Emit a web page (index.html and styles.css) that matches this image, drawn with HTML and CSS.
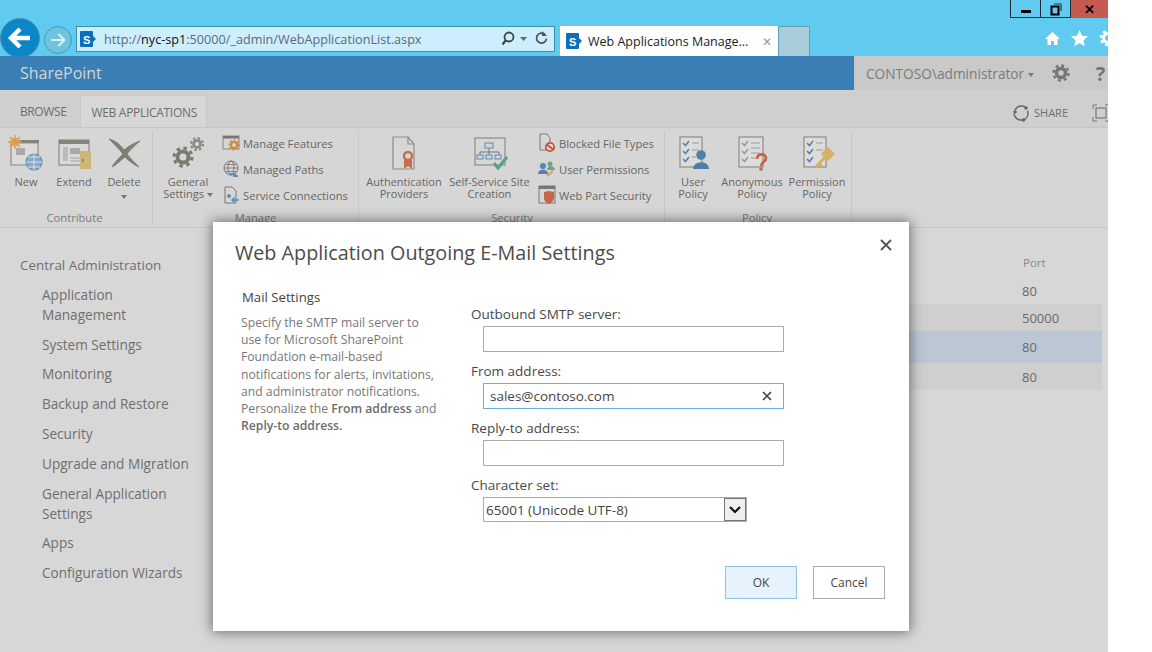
FILE: index.html
```html
<!DOCTYPE html>
<html lang="en">
<head>
<meta charset="utf-8">
<title>Web Applications Management</title>
<link rel="stylesheet" href="styles.css">
</head>
<body>
<div class="page">
  <header class="chrome">
    <div class="winbar">
      <div class="winbtn win-min"><svg width="12" height="12" viewBox="0 0 12 12"><rect x="1" y="7" width="10" height="3" fill="#000"/></svg></div>
      <div class="winbtn win-max"><svg width="14" height="14" viewBox="0 0 14 14"><rect x="2.5" y="4.5" width="7" height="8" fill="none" stroke="#000" stroke-width="2"/><path d="M5 2h7v7" fill="none" stroke="#333" stroke-width="1.2"/></svg></div>
      <div class="winbtn win-close">&#10005;</div>
    </div>
    <div class="navbar">
      <div class="back"><svg width="26" height="24" viewBox="0 0 26 24"><path d="M23 12H5M13 3l-9 9 9 9" fill="none" stroke="#fff" stroke-width="4.4"/></svg></div>
      <div class="forward"><svg width="18" height="16" viewBox="0 0 18 16"><path d="M2 8h13M9.500 2l6 6-6 6" fill="none" stroke="#d6f2fb" stroke-width="2"/></svg></div>
      <div class="address">
        <svg class="sp" width="18" height="18" viewBox="0 0 18 18"><rect x="1" y="1" width="13" height="16" rx="1" fill="#0b6fc0"/><path d="M13 5l4 4-4 4z" fill="#0b6fc0"/><text x="4" y="14" class="sp-s">S</text></svg>
        <span class="url">http://<b>nyc-sp1</b>:50000/_admin/WebApplicationList.aspx</span>
        <svg class="addr-tools" width="50" height="18" viewBox="0 0 50 18"><circle cx="8" cy="7" r="4.500" fill="none" stroke="#444" stroke-width="1.800"/><path d="M5 10l-3.500 4.500" stroke="#444" stroke-width="2.200"/><path d="M19 7h7l-3.500 4z" fill="#666"/><path d="M44 4.500a5 5 0 1 0 1.500 4" fill="none" stroke="#555" stroke-width="1.800"/><path d="M41 1v5h5z" fill="#555"/></svg>
      </div>
      <div class="tab">
        <svg class="sp" width="18" height="18" viewBox="0 0 18 18"><rect x="1" y="1" width="13" height="16" rx="1" fill="#0b6fc0"/><path d="M13 5l4 4-4 4z" fill="#0b6fc0"/><text x="4" y="14" class="sp-s">S</text></svg>
        <span class="tab-title">Web Applications Manage...</span>
        <span class="tab-x">&#10005;</span>
      </div>
      <div class="newtab"></div>
      <div class="ie-tools">
        <svg width="17" height="17" viewBox="0 0 17 17"><path d="M8.500 2L1 9h2.500v6h3.500v-4h3v4h3.500V9H16z" fill="#fff"/></svg>
        <svg width="19" height="18" viewBox="0 0 19 18"><path d="M9.500 1l2.500 5.700 6 .6-4.500 4 1.300 6-5.300-3.100-5.300 3.100 1.300-6L1 7.300l6-.6z" fill="#fff"/></svg>
        <svg width="20" height="18" viewBox="0 0 18 18"><circle cx="9" cy="9" r="4.500" fill="none" stroke="#fff" stroke-width="3"/><circle cx="9" cy="9" r="7" fill="none" stroke="#fff" stroke-width="2.500" stroke-dasharray="3 2.500"/></svg>
      </div>
    </div>
  </header>

  <div class="suite">
    <div class="brand">SharePoint</div>
    <div class="suite-user">
      <span class="user-name">CONTOSO\administrator <i class="caret"></i></span>
      <svg class="suite-gear" width="20" height="20" viewBox="0 0 20 20"><circle cx="10" cy="10" r="4.500" fill="none" stroke="#757575" stroke-width="3.400"/><circle cx="10" cy="10" r="7.500" fill="none" stroke="#757575" stroke-width="2.400" stroke-dasharray="3 2.900"/></svg>
      <span class="help">?</span>
    </div>
  </div>

  <div class="tabs">
    <span class="rtab">BROWSE</span>
    <span class="rtab rtab-active">WEB APPLICATIONS</span>
    <div class="tabs-right">
      <svg width="18" height="18" viewBox="0 0 18 18"><path d="M3 6a7 7 0 0 1 10-3M15.500 7a7 7 0 0 1-3 8.500M10 16a7 7 0 0 1-8-6" fill="none" stroke="#666" stroke-width="1.500"/><circle cx="14" cy="4" r="1.800" fill="#666"/><circle cx="3" cy="8" r="1.800" fill="#666"/><circle cx="11.500" cy="16" r="1.800" fill="#666"/></svg>
      <span class="share">SHARE</span>
      <svg class="focus" width="18" height="18" viewBox="0 0 18 18"><path d="M1 5V1h4M13 1h4v4M1 13v4h4M13 17h4v-4" fill="none" stroke="#777" stroke-width="1"/><rect x="4" y="4" width="10" height="10" fill="none" stroke="#777" stroke-width="1.200"/></svg>
    </div>
  </div>

  <div class="ribbon">
    <section class="group g-contribute">
      <div class="group-body">
        <div class="big w48">
          <svg class="ic" width="36" height="36" viewBox="0 0 36 36"><path d="M3 8h27v22H3z" fill="#dcdcdc" stroke="#8f8d80" stroke-width="1.200"/><rect x="3" y="5" width="28" height="3" fill="#85847a"/><rect x="8" y="13" width="9" height="7" fill="#a9a9a9"/><circle cx="7" cy="7" r="4.500" fill="#d8b47a"/><path d="M7 0v14M0 7h14M2 2l10 10M12 2L2 12" stroke="#d99a4a" stroke-width="1.300"/><circle cx="26" cy="27" r="8" fill="#8aa8c4" stroke="#5c8cb8" stroke-width="1.200"/><path d="M18 27h16M26 19v16M20 22h12M20 32h12" stroke="#d9e3ea" stroke-width="1"/></svg>
          <span>New</span>
        </div>
        <div class="big w48">
          <svg class="ic" width="36" height="36" viewBox="0 0 36 36"><rect x="3" y="5" width="30" height="25" fill="#d9d9d9" stroke="#8f8d80" stroke-width="1.200"/><rect x="3" y="5" width="30" height="4" fill="#85847a"/><rect x="7" y="12" width="5" height="14" fill="#bbb"/><rect x="14" y="13" width="10" height="6" fill="#a9a9a9"/><path d="M14 23h10M14 26h10" stroke="#a5a5a5"/><rect x="24" y="16" width="11" height="18" fill="#cdb67a"/><rect x="26" y="24" width="1.500" height="3" fill="#8f7b45"/></svg>
          <span>Extend</span>
        </div>
        <div class="big w48 gap2">
          <svg class="ic" width="36" height="36" viewBox="0 0 36 36"><path d="M3 4c8 2 12 7 15 11C23 11 28 8 34 6c-4 3-11 10-13 13 3 4 8 9 12 13-5-2-11-7-14-10-4 3-9 8-13 10 2-4 8-10 11-13C14 15 8 9 3 4z" fill="#807e72" stroke="#807e72"/></svg>
          <span>Delete</span>
          <i class="caret caret-under"></i>
        </div>
      </div>
      <div class="group-label">Contribute</div>
    </section>

    <section class="group g-manage">
      <div class="group-body">
        <div class="big w60">
          <svg class="ic" width="36" height="36" viewBox="0 0 36 36"><circle cx="13" cy="22" r="5.500" fill="none" stroke="#7c7a6e" stroke-width="4"/><circle cx="13" cy="22" r="9" fill="none" stroke="#7c7a6e" stroke-width="3" stroke-dasharray="3.500 3.600"/><circle cx="27" cy="9" r="3.500" fill="none" stroke="#8c8a7e" stroke-width="2.600"/><circle cx="27" cy="9" r="6" fill="none" stroke="#8c8a7e" stroke-width="2.200" stroke-dasharray="2.400 2.300"/></svg>
          <span>General<br>Settings <i class="caret"></i></span>
        </div>
        <div class="smalls">
          <div class="small"><svg width="18" height="18" viewBox="0 0 18 18"><rect x="1" y="2" width="16" height="13" fill="none" stroke="#888"/><rect x="1" y="2" width="16" height="2.500" fill="#777"/><circle cx="12" cy="11" r="3" fill="none" stroke="#d08838" stroke-width="2"/><circle cx="12" cy="11" r="4.800" fill="none" stroke="#d08838" stroke-width="1.500" stroke-dasharray="1.800 1.800"/></svg><span>Manage Features</span></div>
          <div class="small"><svg width="18" height="18" viewBox="0 0 18 18"><circle cx="9" cy="8" r="7" fill="none" stroke="#777"/><ellipse cx="9" cy="8" rx="3" ry="7" fill="none" stroke="#777"/><path d="M2 8h14M3 4.500h12M3 11.500h12" stroke="#777" stroke-width=".8"/><path d="M8 14h6M11 16h5" stroke="#5c8cb8" stroke-width="2"/></svg><span>Managed Paths</span></div>
          <div class="small"><svg width="18" height="18" viewBox="0 0 18 18"><path d="M3 1h7l4 4v12H3z" fill="none" stroke="#777"/><circle cx="7" cy="10" r="2" fill="#5c8cb8"/><path d="M17 14H10M12.500 11.500L10 14l2.500 2.500" fill="none" stroke="#5c8cb8" stroke-width="1.500"/></svg><span>Service Connections</span></div>
        </div>
      </div>
      <div class="group-label">Manage</div>
    </section>

    <section class="group g-security">
      <div class="group-body">
        <div class="big w78">
          <svg class="ic" width="36" height="36" viewBox="0 0 36 36"><path d="M7 2h15l6 7v25H7z" fill="none" stroke="#8f8d80" stroke-width="1.200"/><path d="M22 2v7h6" fill="none" stroke="#8f8d80" stroke-width="1.200"/><circle cx="22" cy="21" r="4" fill="none" stroke="#c76c4c" stroke-width="2.400"/><path d="M18 25h8v9l-4-3-4 3z" fill="#c76c4c"/></svg>
          <span>Authentication<br>Providers</span>
        </div>
        <div class="big w83">
          <svg class="ic" width="36" height="36" viewBox="0 0 36 36"><rect x="3" y="3" width="30" height="27" fill="none" stroke="#8f8d80" stroke-width="1.200"/><rect x="13" y="8" width="8" height="5" fill="none" stroke="#5c8cb8"/><path d="M17 13v4M8 17h19M8 17v3M17 17v3M27 17v3" stroke="#777" fill="none"/><rect x="5" y="20" width="6" height="4" fill="none" stroke="#5c8cb8"/><rect x="14" y="20" width="6" height="4" fill="none" stroke="#5c8cb8"/><rect x="23" y="20" width="6" height="4" fill="none" stroke="#5c8cb8"/><path d="M22 28l4 5 9-11" fill="none" stroke="#58a08c" stroke-width="3"/></svg>
          <span>Self-Service Site<br>Creation</span>
        </div>
        <div class="smalls">
          <div class="small"><svg width="18" height="20" viewBox="0 0 18 20"><path d="M2 1h7l3 4v12H2z" fill="none" stroke="#777"/><circle cx="12" cy="14" r="4.200" fill="#ddd" stroke="#c0573c" stroke-width="1.800"/><path d="M9 11.500l6 5" stroke="#c0573c" stroke-width="1.800"/></svg><span>Blocked File Types</span></div>
          <div class="small"><svg width="18" height="18" viewBox="0 0 18 18"><circle cx="5" cy="6" r="3" fill="#5c82ad"/><path d="M0 14c0-6 10-6 10 0z" fill="#5c82ad"/><circle cx="12" cy="4" r="2.500" fill="#70a088"/><path d="M9 10c0-5 8-5 8 0z" fill="#70a088"/><path d="M9 16l6-5" stroke="#cdae6c" stroke-width="2.400"/></svg><span>User Permissions</span></div>
          <div class="small"><svg width="18" height="20" viewBox="0 0 18 20"><rect x="1" y="1" width="16" height="17" fill="none" stroke="#777"/><rect x="1" y="1" width="16" height="3" fill="#777"/><path d="M6 7l5-1 5 1v6c0 3-3 5-5 6-2-1-5-3-5-6z" fill="#c76644"/></svg><span>Web Part Security</span></div>
        </div>
      </div>
      <div class="group-label">Security</div>
    </section>

    <section class="group g-policy">
      <div class="group-body">
        <div class="big w50">
          <svg class="ic" width="36" height="36" viewBox="0 0 36 36"><rect x="5" y="2" width="22" height="30" fill="#dcdcdc" stroke="#8f8d80" stroke-width="1.200"/><path d="M8 8l2.500 2.500L14 6M8 16l2.500 2.500L14 14M8 24l2.500 2.500L14 22" fill="none" stroke="#4f80b0" stroke-width="1.500"/><path d="M17 8h7M17 15h7M17 22h4" stroke="#999" stroke-width="1.200"/><circle cx="26" cy="20" r="4.800" fill="#4f7fa8"/><path d="M18 34c0-9 16-9 16 0z" fill="#4f7fa8"/></svg>
          <span>User<br>Policy</span>
        </div>
        <div class="big w64">
          <svg class="ic" width="36" height="36" viewBox="0 0 36 36"><rect x="5" y="2" width="24" height="30" fill="#dcdcdc" stroke="#8f8d80" stroke-width="1.200"/><path d="M8 8l2.500 2.500L14 6M8 16l2.500 2.500L14 14M8 24l2.500 2.500L14 22" fill="none" stroke="#999" stroke-width="1.500"/><path d="M17 8h9M17 13h9M17 18h9M17 23h4" stroke="#999" stroke-width="1.200"/><path d="M23 24c0-6 9-6 9-1 0 4-5 4-5 8" fill="none" stroke="#c7613e" stroke-width="2.600"/><circle cx="27" cy="34" r="1.800" fill="#c7613e"/></svg>
          <span>Anonymous<br>Policy</span>
        </div>
        <div class="big w62">
          <svg class="ic" width="36" height="36" viewBox="0 0 36 36"><rect x="5" y="2" width="22" height="30" fill="#dcdcdc" stroke="#8f8d80" stroke-width="1.200"/><path d="M8 8l2.500 2.500L14 6M8 16l2.500 2.500L14 14M8 24l2.500 2.500L14 22" fill="none" stroke="#4f80b0" stroke-width="1.500"/><path d="M17 8h7M17 15h7" stroke="#999" stroke-width="1.200"/><rect x="24" y="14" width="10" height="10" transform="rotate(45 29 19)" fill="#d2b265"/><path d="M26 22L17 32M20 29l3 2" stroke="#d2b265" stroke-width="3"/></svg>
          <span>Permission<br>Policy</span>
        </div>
      </div>
      <div class="group-label">Policy</div>
    </section>
  </div>

  <div class="content">
    <nav class="sidenav">
      <a class="nav-root">Central Administration</a>
      <a class="nav-item">Application<br>Management</a>
      <a class="nav-item">System Settings</a>
      <a class="nav-item">Monitoring</a>
      <a class="nav-item">Backup and Restore</a>
      <a class="nav-item">Security</a>
      <a class="nav-item">Upgrade and Migration</a>
      <a class="nav-item">General Application<br>Settings</a>
      <a class="nav-item">Apps</a>
      <a class="nav-item">Configuration Wizards</a>
    </nav>
    <div class="list">
      <div class="list-head">Port</div>
      <div class="list-row r1">80</div>
      <div class="list-row r2 alt">50000</div>
      <div class="list-row r3 sel">80</div>
      <div class="list-row r4 alt">80</div>
    </div>
  </div>

  <div class="modal">
    <div class="modal-head">
      <h1>Web Application Outgoing E-Mail Settings</h1>
      <svg class="modal-x" width="12" height="12" viewBox="0 0 12 12"><path d="M1 1l10 10M11 1L1 11" stroke="#555" stroke-width="1.900"/></svg>
    </div>
    <div class="modal-body">
      <div class="desc">
        <h2>Mail Settings</h2>
        <p>Specify the SMTP mail server to use for Microsoft SharePoint Foundation e-mail-based notifications for alerts, invitations, and administrator notifications. Personalize the <b>From address</b> and <b>Reply-to address.</b></p>
      </div>
      <div class="form">
        <label class="lab">Outbound SMTP server:</label>
        <div class="input"></div>
        <label class="lab">From address:</label>
        <div class="input input-focus"><span>sales@contoso.com</span><svg width="10" height="10" viewBox="0 0 10 10"><path d="M1 1l8 8M9 1L1 9" stroke="#444" stroke-width="1.700"/></svg></div>
        <label class="lab">Reply-to address:</label>
        <div class="input"></div>
        <label class="lab">Character set:</label>
        <div class="select"><span>65001 (Unicode UTF-8)</span><div class="select-btn"><svg width="14" height="10" viewBox="0 0 14 10"><path d="M2 2l5 5 5-5" fill="none" stroke="#111" stroke-width="2.200"/></svg></div></div>
      </div>
    </div>
    <div class="modal-foot">
      <div class="btn btn-ok">OK</div>
      <div class="btn">Cancel</div>
    </div>
  </div>
</div>
</body>
</html>
```
FILE: styles.css
```css
* { box-sizing: border-box; }
html, body { margin: 0; padding: 0; background: #fff; }
body { font-family: "Open Sans", "Noto Sans", "Liberation Sans", sans-serif; overflow: hidden; }
.page { position: relative; width: 1108px; height: 652px; overflow: hidden; background: #d7d7d7; display: flex; flex-direction: column; }

/* browser chrome */
.chrome { height: 56px; flex: none; background: #60caf0; overflow: hidden; }
.winbar { height: 26px; display: flex; justify-content: flex-end; align-items: flex-start; }
.winbtn { height: 18px; border: 1px solid #1c2b33; border-top: 0; display: flex; align-items: center; justify-content: center; }
.win-min { width: 31px; }
.win-max { width: 30px; border-left: 0; }
.win-close { width: 37px; border: 0; background: #c65a51; color: #000; font-size: 13px; font-weight: 700; }
.navbar { height: 30px; display: flex; align-items: flex-start; }
.back { width: 40px; height: 40px; margin: -8px 0 0 0; border-radius: 50%; background: #0b86c6; border: 1px solid #4a93ad; flex: none; display: flex; align-items: center; justify-content: center; }
.forward { width: 28px; height: 28px; margin: 0 4px 0 4px; border-radius: 50%; background: #6fc3de; border: 1px solid #3f9dbb; flex: none; display: flex; align-items: center; justify-content: center; }
.address { width: 479px; height: 26px; background: #cdeeff; border: 1px solid #3f8fa8; display: flex; align-items: center; padding-left: 2px; flex: none; }
.sp { flex: none; }
.sp-s { font: 700 11px "Liberation Sans", sans-serif; fill: #fff; }
.url { margin-left: 7px; font-size: 12.650px; color: #5c6b72; white-space: nowrap; flex: 1; }
.url b { font-weight: 400; color: #111; }
.addr-tools { flex: none; margin-right: 3px; }
.tab { width: 218px; height: 30px; margin-left: 5px; background: #fff; display: flex; align-items: center; padding-left: 5px; flex: none; }
.tab-title { margin-left: 5px; font-size: 12.500px; color: #222; white-space: nowrap; flex: 1; }
.tab-x { color: #9a9a9a; font-size: 12px; margin-right: 6px; }
.newtab { width: 32px; height: 30px; background: #a8ccd8; border: 1px solid #5aa3bb; border-bottom: 0; flex: none; }
.ie-tools { display: flex; gap: 9px; margin-left: auto; margin-right: -10px; margin-top: 3px; align-items: center; flex: none; }

/* suite bar */
.suite { height: 34px; flex: none; display: flex; background: #3a7fb5; }
.brand { flex: 1; padding-left: 20px; font-size: 16px; line-height: 34px; color: #d5d5d5; }
.suite-user { width: 254px; background: #c9c9c9; display: flex; align-items: center; padding-left: 12px; color: #7b7b7b; overflow: hidden; }
.user-name { font-size: 13.700px; white-space: nowrap; }
.suite-gear { margin-left: 17px; flex: none; }
.help { margin-left: 25px; font-size: 20px; font-weight: 700; color: #757575; }
.caret { display: inline-block; width: 0; height: 0; border: 3.500px solid transparent; border-top: 4px solid #777; border-bottom: 0; vertical-align: middle; }

/* ribbon */
.tabs { height: 38px; flex: none; background: #cfcfcf; display: flex; align-items: flex-end; padding-left: 8px; border-bottom: 1px solid #c5c5c5; }
.rtab { height: 32px; padding: 0 12px; font-size: 12px; line-height: 33px; color: #6d6d6d; letter-spacing: -.4px; }
.rtab-active { width: 127px; background: #d7d7d7; border: 1px solid #c9c9c9; border-bottom: 0; padding: 0 0 0 10px; margin-left: 2px; letter-spacing: -.3px; }
.tabs-right { margin-left: auto; display: flex; align-items: center; align-self: center; margin-top: 8px; margin-right: -2px; gap: 4px; }
.share { font-size: 11px; color: #707070; margin-right: 20px; }
.ribbon { height: 100px; flex: none; background: #d6d6d6; border-bottom: 1px solid #c6c6c6; display: flex; padding-top: 3px; }
.group { display: flex; flex-direction: column; border-right: 1px solid #c8c8c8; height: 94px; flex: none; }
.g-contribute { width: 153px; padding-left: 2px; }
.g-manage { width: 206px; padding-left: 5px; }
.g-security { width: 306px; padding-left: 6px; }
.g-policy { width: 187px; padding-left: 3px; }
.group-body { height: 80px; display: flex; gap: 2px; }
.g-contribute .group-body { gap: 0; }
.g-security .group-body { gap: 5px; }
.group-label { height: 14px; line-height: 14px; margin-top: 1px; padding-right: 5px; text-align: center; font-size: 11.200px; color: #7b7b7b; }
.big { display: flex; flex-direction: column; align-items: center; font-size: 11px; line-height: 12px; color: #666; text-align: center; white-space: nowrap; flex: none; }
.ic { margin: 4px 0 5px; flex: none; }
.gap2 { margin-left: 2px; }
.caret-under { margin-top: 7px; }
.w48 { width: 48px; } .w50 { width: 50px; } .w60 { width: 60px; } .w62 { width: 62px; }
.w64 { width: 64px; } .w78 { width: 78px; } .w83 { width: 83px; }
.smalls { display: flex; flex-direction: column; gap: 6px; padding-top: 2px; margin-left: 2px; }
.small { height: 20px; display: flex; align-items: center; gap: 3px; font-size: 11.200px; color: #666; white-space: nowrap; }
.small svg { flex: none; }

/* content */
.content { flex: 1; display: flex; }
.sidenav { width: 230px; flex: none; padding: 27px 0 0 20px; display: flex; flex-direction: column; gap: 9.800px; font-size: 13.400px; line-height: 20px; color: #6f6f6f; }
.nav-item { padding-left: 22px; font-size: 13.600px; }
.list { flex: 1; padding: 26px 6px 0 0; }
.list-head { height: 22px; line-height: 18px; padding-left: 793px; font-size: 11.500px; color: #8b8b8b; }
.list-row { padding-left: 792px; font-size: 13px; color: #6a6a6a; display: flex; align-items: center; }
.r1 { height: 28px; padding-top: 2px; }
.r2 { height: 27px; }
.r3 { height: 32px; }
.r4 { height: 27px; }
.alt { background: #cfcfcf; }
.sel { background: #bcc7d6; }

/* dialog */
.modal { position: absolute; left: 213px; top: 222px; width: 696px; height: 409px; background: #fff; box-shadow: 0 0 12px 1px rgba(0,0,0,.5); display: flex; flex-direction: column; }
.modal-head { height: 54px; flex: none; display: flex; justify-content: space-between; padding: 17px 17px 0 22px; }
h1 { margin: 0; font-size: 19.800px; font-weight: 400; line-height: 28px; color: #4c4c4c; white-space: nowrap; }
.modal-x { margin-top: 0; }
.modal-body { flex: 1; display: flex; padding-left: 28px; }
.desc { width: 230px; flex: none; }
h2 { margin: 12px 0 0 1px; font-size: 13.200px; font-weight: 400; line-height: 18px; color: #444; }
p { margin: 8px 0 0; width: 198px; font-size: 12.200px; line-height: 17.200px; color: #777; }
p b { font-weight: 600; color: #6c6c6c; }
.form { display: flex; flex-direction: column; padding-top: 28px; }
.lab { height: 22px; line-height: 20px; font-size: 13.500px; color: #484848; }
.input { width: 301px; height: 26px; margin: 0 0 9px 12px; background: #fff; border: 1px solid #ababab; display: flex; align-items: center; justify-content: space-between; padding: 0 11px 0 6px; font-size: 13.500px; color: #444; }
.input-focus { border-color: #6aaee6; }
.select { width: 264px; height: 25px; margin-left: 12px; border: 1px solid #ababab; display: flex; align-items: center; justify-content: space-between; font-size: 13.500px; color: #444; padding-left: 2px; }
.select-btn { width: 22px; height: 23px; border: 1px solid #777; background: #eee; display: flex; align-items: center; justify-content: center; }
.modal-foot { height: 65px; flex: none; display: flex; justify-content: flex-end; gap: 16px; padding-right: 24px; }
.btn { width: 72px; height: 33px; border: 1px solid #ababab; font-size: 12px; line-height: 31px; text-align: center; color: #444; }
.btn-ok { background: #e6f2fc; border-color: #92c0e0; }
```
